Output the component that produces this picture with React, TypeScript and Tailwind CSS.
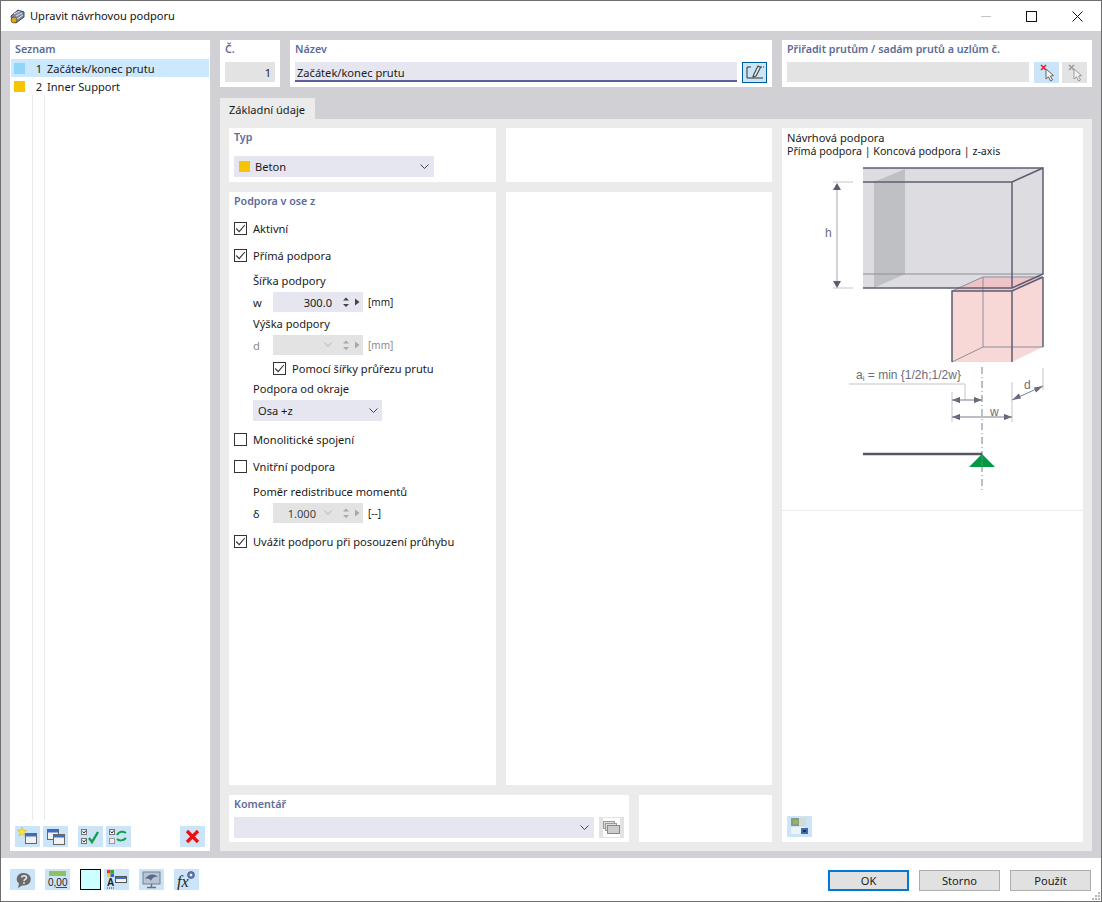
import React from "react";

const Chevron = ({ c = "#444", w = 9 }: { c?: string; w?: number }) => (
  <svg width={w} height="5" viewBox="0 0 9 5" preserveAspectRatio="none" className="shrink-0"><path d="M.5.5 4.5 4.5 8.5.5" fill="none" stroke={c} strokeWidth="1" /></svg>
);

const Check = ({ on = false }: { on?: boolean }) => (
  <span className="w-[13px] h-[13px] border border-[#333333] bg-white flex items-center justify-center shrink-0">
    {on && <svg width="11" height="11" viewBox="0 0 11 11"><path d="M1.2 5.5 4.2 8.6 9.8 2" fill="none" stroke="#333" strokeWidth="1.1" /></svg>}
  </span>
);

const CheckRow = ({ label, on, cls }: { label: string; on?: boolean; cls: string }) => (
  <div className={`flex items-center gap-[6px] h-[18px] ${cls}`}>
    <Check on={on} />
    <span>{label}</span>
  </div>
);

const Spin = ({ dis }: { dis?: boolean }) => {
  const c = dis ? "#a8a8a8" : "#444";
  return (
    <svg width="22" height="14" viewBox="0 0 22 14" className="shrink-0">
      <path d="M3 5.5 6 2.5 9 5.5Z M3 9 6 12 9 9Z" fill={c} />
      <path d="M15 3.5 19.5 7 15 10.5Z" fill={c} />
    </svg>
  );
};

const Btn = ({ children, gray }: { children: React.ReactNode; gray?: boolean }) => (
  <span className={`w-[25px] h-[21px] flex items-center justify-center shrink-0 ${gray ? "bg-[#e3e3e3]" : "bg-[#cce4f7]"}`}>{children}</span>
);

const Cursor = ({ c, x }: { c: string; x: string }) => (
  <svg width="21" height="20" viewBox="-3 -1 21 20">
    <path d="M7 5 7 15 9.5 12.8 11.5 17 13.5 16 11.5 12 14.5 11.5Z" fill="#f4f4f4" stroke={c} strokeWidth="1" />
    <path d="M2 1 7 6M7 1 2 6" stroke={x} strokeWidth="1.6" />
  </svg>
);

const Win = ({ x, y }: { x: number; y: number }) => (
  <g>
    <rect x={x + 0.5} y={y + 0.5} width="11" height="10" fill="#f2f2f2" stroke="#666" />
    <rect x={x + 1} y={y + 1} width="10" height="2.5" fill="#3b6fc4" />
  </g>
);

const Head = ({ children, h }: { children: React.ReactNode; h: string }) => (
  <div className={`${h} text-[10.7px] leading-[18px] font-semibold text-[#5b6b9a]`}>{children}</div>
);

export default function App() {
  return (
    <div className="w-[1102px] h-[902px] flex flex-col border border-[#6e6e6e] bg-white text-[11.1px] leading-[18px] text-[#1a1a1a] overflow-hidden relative" style={{ fontFamily: '"Noto Sans", sans-serif' }}>
      {/* title bar */}
      <div className="h-[30px] shrink-0 flex items-center bg-white">
        <svg width="17" height="17" viewBox="0 0 17 17" className="ml-[8px]">
          <path d="M2 8 9 2 15 4 15 9 7 15 3 13Z" fill="#7d8aa3" stroke="#3d4658" strokeWidth="1" />
          <path d="M5 6 11 3M7 8 13 5M8 11 14 7" stroke="#dfe5ee" strokeWidth="1" />
          <circle cx="5" cy="12" r="3" fill="#d8a52b" stroke="#5a4a1a" strokeWidth=".7" />
        </svg>
        <span className="ml-[4px] text-[#111]">Upravit návrhovou podporu</span>
        <div className="ml-auto flex items-center">
          <span className="w-[10px] h-px bg-[#c4c4c4] mr-[35px]" />
          <span className="w-[11px] h-[11px] border border-[#111] mr-[35px]" />
          <svg width="11" height="11" viewBox="0 0 11 11" className="mr-[18px]"><path d="M.5.5 10.5 10.5M10.5.5.5 10.5" stroke="#111" strokeWidth="1" /></svg>
        </div>
      </div>

      {/* main */}
      <div className="h-[827px] shrink-0 bg-[#d0d0d5] pt-[9px] pl-[9px] pr-[9px] flex gap-[10px]">
        {/* list */}
        <div className="w-[200px] h-[811px] bg-white flex flex-col shrink-0">
          <div className="pl-[5px]"><Head h="h-[19px]">Seznam</Head></div>
          <div className="mx-px flex-1 min-h-0 flex flex-col">
            <div className="h-[18px] flex items-center bg-[#cce8ff]">
              <span className="w-[11px] h-[11px] bg-[#91d6f7] ml-[3px]" />
              <span className="w-[14px] text-right ml-[3px] pt-[2px]">1</span>
              <span className="ml-[5px] pt-[2px]">Začátek/konec prutu</span>
            </div>
            <div className="h-[18px] flex items-center">
              <span className="w-[11px] h-[11px] bg-[#f6c500] ml-[3px]" />
              <span className="w-[14px] text-right ml-[3px] pt-[2px]">2</span>
              <span className="ml-[5px] pt-[2px]">Inner Support</span>
            </div>
            <div className="flex-1 min-h-0 ml-[21px] flex">
              <span className="w-px bg-[#e8e8e8]" />
              <span className="w-px bg-[#e8e8e8] ml-[11px]" />
            </div>
          </div>
          <div className="h-[21px] mt-[6px] mb-[4px] pl-[5px] flex items-start shrink-0">
            <Btn><svg width="22" height="19" viewBox="0 0 22 19"><Win x={8} y={6} /><path d="M5 0 6.3 3.2 9.6 3.4 7 5.5 8 9 5 7 2 9 3 5.5.4 3.4 3.7 3.2Z" fill="#f7e640" stroke="#c6ad20" strokeWidth=".5" /></svg></Btn>
            <span className="w-[3px]" />
            <Btn><svg width="20" height="18" viewBox="0 0 20 18"><Win x={1} y={1} /><Win x={7} y={6} /></svg></Btn>
            <span className="w-[10px]" />
            <Btn><svg width="21" height="18" viewBox="0 0 21 18"><rect x="1.5" y="1.5" width="5" height="5" fill="#eee" stroke="#777" /><rect x="1.5" y="10.5" width="5" height="5" fill="#eee" stroke="#777" /><path d="M2.5 3.5 4 5 6 2.5M2.5 12.5 4 14 6 11.5" fill="none" stroke="#333" /><path d="M9 10 12 14 18 4" fill="none" stroke="#12a04a" strokeWidth="2.4" /></svg></Btn>
            <span className="w-[3px]" />
            <Btn><svg width="21" height="18" viewBox="0 0 21 18"><rect x="1.5" y="1.5" width="5" height="5" fill="#eee" stroke="#777" /><rect x="1.5" y="10.5" width="5" height="5" fill="#eee" stroke="#999" /><path d="M2.5 3.5 4 5 6 2.5" fill="none" stroke="#333" /><path d="M9 7C11 3 15 3 18 5M18 10C15 13 11 13 9 11" fill="none" stroke="#12a04a" strokeWidth="2" /></svg></Btn>
            <span className="w-[49px]" />
            <Btn><svg width="15" height="15" viewBox="0 0 15 15"><path d="M2 2 13 13M13 2 2 13" stroke="#ee0f0f" strokeWidth="3.2" /></svg></Btn>
          </div>
        </div>

        {/* right column */}
        <div className="w-[872px] h-[811px] flex flex-col shrink-0">
          <div className="flex gap-[10px] h-[47px] shrink-0">
            <div className="w-[60px] bg-white px-[5px]">
              <Head h="h-[22px]">Č.</Head>
              <div className="h-[20px] bg-[#e3e3e3] text-right pr-[4px] leading-[22px]">1</div>
            </div>
            <div className="w-[482px] bg-white px-[5px]">
              <Head h="h-[22px]">Název</Head>
              <div className="flex gap-[5px]">
                <div className="w-[442px] h-[20px] bg-[#e5e6f0] border-b-2 border-[#5f5f9f] pl-[2px] leading-[22px]">Začátek/konec prutu</div>
                <span className="w-[25px] h-[21px] bg-[#cce4f7] border border-[#005a9e] flex items-center justify-center">
                  <svg width="20" height="17" viewBox="0 0 20 17"><path d="M6 3H2V14H18" fill="none" stroke="#333" /><path d="M8.5 11 13 2 15.5 3.5 11 12 8 13Z" fill="#e8e8e8" stroke="#444" strokeWidth="1.1" /><path d="M15 3H19" stroke="#333" strokeDasharray="2 1" /></svg>
                </span>
              </div>
            </div>
            <div className="w-[310px] bg-white px-[5px]">
              <Head h="h-[22px]">Přiřadit prutům / sadám prutů a uzlům č.</Head>
              <div className="flex">
                <div className="w-[242px] h-[20px] bg-[#e3e3e3]" />
                <span className="w-[5px]" />
                <Btn><Cursor c="#666" x="#e8202a" /></Btn>
                <span className="w-[3px]" />
                <Btn gray><Cursor c="#999" x="#9a9a9a" /></Btn>
              </div>
            </div>
          </div>

          <div className="mt-[11px] w-[95px] h-[21px] bg-[#ebebeb] pl-[9px] leading-[24px] shrink-0">Základní údaje</div>

          <div className="h-[732px] bg-[#ebebeb] p-[9px] flex gap-[10px] shrink-0">
            <div className="w-[543px] flex flex-col gap-[10px] shrink-0">
              <div className="flex gap-[10px] h-[54px]">
                <div className="w-[267px] bg-white px-[5px]">
                  <Head h="h-[28px]">Typ</Head>
                  <div className="w-[200px] h-[21px] bg-[#e5e6f0] flex items-center pl-[5px] pr-[5px]">
                    <span className="w-[11px] h-[11px] bg-[#f6c500]" />
                    <span className="ml-[5px]">Beton</span>
                    <span className="ml-auto"><Chevron /></span>
                  </div>
                </div>
                <div className="w-[266px] bg-white" />
              </div>
              <div className="flex gap-[10px] h-[594px]">
                <div className="w-[267px] bg-white px-[5px]">
                  <Head h="h-[18px]">Podpora v ose z</Head>
                  <CheckRow cls="mt-[10px]" label="Aktivní" on />
                  <CheckRow cls="mt-[9px]" label="Přímá podpora" on />
                  <div className="mt-[7px] h-[18px] ml-[19px]">Šířka podpory</div>
                  <div className="mt-[2px] h-[20px] ml-[19px] flex items-center">
                    <span className="w-[20px] pt-[2px]">w</span>
                    <div className="w-[90px] h-[20px] bg-[#e5e6f0] flex items-center justify-end pr-[1px]">
                      <span className="pt-[2px]">300.0</span>
                      <span className="ml-[8px]"><Spin /></span>
                    </div>
                    <span className="ml-[5px] text-[10px] pt-[1px]">[mm]</span>
                  </div>
                  <div className="mt-[3px] h-[18px] ml-[19px]">Výška podpory</div>
                  <div className="mt-[2px] h-[20px] ml-[19px] flex items-center text-[#8a8a8a]">
                    <span className="w-[20px] pt-[2px]">d</span>
                    <div className="w-[90px] h-[20px] bg-[#e3e3e3] flex items-center justify-end pr-[1px]">
                      <Chevron c="#b0b0b0" w={8} />
                      <span className="ml-[8px]"><Spin dis /></span>
                    </div>
                    <span className="ml-[5px] text-[10px] pt-[1px]">[mm]</span>
                  </div>
                  <CheckRow cls="mt-[5px] ml-[39px]" label="Pomocí šířky průřezu prutu" on />
                  <div className="mt-[2px] h-[18px] ml-[19px]">Podpora od okraje</div>
                  <div className="mt-[2px] w-[129px] h-[21px] ml-[19px] bg-[#e5e6f0] flex items-center pl-[5px] pr-[4px]">
                    <span className="pt-[2px]">Osa +z</span>
                    <span className="ml-auto"><Chevron /></span>
                  </div>
                  <CheckRow cls="mt-[10px]" label="Monolitické spojení" />
                  <CheckRow cls="mt-[9px]" label="Vnitřní podpora" />
                  <div className="mt-[7px] h-[18px] ml-[19px]">Poměr redistribuce momentů</div>
                  <div className="mt-[2px] h-[20px] ml-[19px] flex items-center">
                    <span className="w-[20px] pt-[2px]">δ</span>
                    <div className="w-[90px] h-[20px] bg-[#e3e3e3] flex items-center justify-end pr-[1px] text-[#444]">
                      <span className="pt-[2px]">1.000</span>
                      <span className="ml-[8px]"><Chevron c="#b0b0b0" w={8} /></span>
                      <span className="ml-[8px]"><Spin dis /></span>
                    </div>
                    <span className="ml-[5px] text-[10px] pt-[1px]">[--]</span>
                  </div>
                  <CheckRow cls="mt-[10px]" label="Uvážit podporu při posouzení průhybu" on />
                </div>
                <div className="w-[266px] bg-white" />
              </div>
              <div className="flex gap-[10px] h-[47px]">
                <div className="w-[400px] bg-white px-[5px]">
                  <Head h="h-[22px]">Komentář</Head>
                  <div className="flex gap-[5px]">
                    <div className="w-[360px] h-[21px] bg-[#e5e6f0] flex items-center justify-end pr-[5px]"><Chevron /></div>
                    <Btn gray>
                      <span className="w-[17px] h-[19px] bg-white flex items-center justify-center">
                        <svg width="17" height="13" viewBox="0 0 17 13"><rect x=".5" y=".5" width="11" height="7" fill="#ddd" stroke="#999" /><rect x="2.5" y="2.5" width="11" height="7" fill="#ddd" stroke="#999" /><rect x="4.5" y="4.5" width="12" height="8" fill="#ccc" stroke="#888" /></svg>
                      </span>
                    </Btn>
                  </div>
                </div>
                <div className="w-[133px] bg-white" />
              </div>
            </div>

            <div className="w-[301px] bg-white flex flex-col shrink-0 pb-[5px]">
              <div className="h-[32px] pl-[5px] pt-[3px] leading-[13px] shrink-0">
                <div>Návrhová podpora</div>
                <div className="text-[10.65px] leading-[14px]">Přímá podpora | Koncová podpora | z-axis</div>
              </div>
              <svg width="301" height="350" viewBox="782 160 301 350" className="shrink-0">
                <polygon points="863,168 1043,168 1043,274 1012,288 863,288" fill="#dcdce1" />
                <polygon points="874,182 905,169 905,274 874,288" fill="#bfc0c4" />
                <polygon points="983,277 1043,277 1043,347 1012,362 952,362 952,291" fill="#f8d7d7" />
                <polygon points="983,277 1043,277 1012,291 952,291" fill="#eec4c8" />
                <g fill="none" stroke="#8e8e9c" strokeWidth="1">
                  <path d="M863 274H1043" />
                  <path d="M983 277V347M983 347H1043M983 347 952 362M983 277H1043M983 277 952 291" />
                </g>
                <g fill="none" stroke="#5d5d72" strokeWidth="1.5">
                  <path d="M863 168H1043V274L1012 288H863" />
                  <path d="M863 182H1012V288M1012 182 1043 168" />
                  <path d="M952 362V291H1012V362M1043 277V347M1012 291 1043 277" />
                </g>
                <g stroke="#c5c5cd" strokeWidth="1" fill="none">
                  <path d="M833 182H853M833 288H853" />
                  <path d="M837 186V284" strokeWidth="1.5" />
                  <path d="M849 384H965V400M952 392V422M1012 382V422M1043 368V390" />
                </g>
                <g fill="#5d5d72">
                  <path d="M837 183 833 190H841Z M837 288 833 281H841Z" />
                  <path d="M952 400 960 397V403Z M982 400 974 397V403Z M952 417 960 414V420Z M1012 417 1004 414V420Z" />
                  <path d="M1012 400 1019 393.5 1021 398.5Z M1043 386 1036 392.5 1034 387.5Z" />
                </g>
                <g stroke="#7c7c8c" strokeWidth="1" fill="none">
                  <path d="M952 400H982M952 417H1012M1012 400 1043 386" />
                  <path d="M982 367V490" strokeDasharray="7 3 1 3" />
                </g>
                <path d="M863 454H982" stroke="#55556a" strokeWidth="2.5" />
                <polygon points="982,454 995,467 969,467" fill="#009a44" />
                <path d="M982 456V467" stroke="#7c7c8c" strokeDasharray="4 2" />
                <g fill="#6c6c7c" style={{ fontFamily: '"Liberation Sans", sans-serif' }} fontSize="12">
                  <text x="825" y="237">h</text>
                  <text x="856" y="379">a<tspan fontSize="8" dy="2">i</tspan><tspan dy="-2"> = min {"{"}1/2h;1/2w{"}"}</tspan></text>
                  <text x="990" y="416">w</text>
                  <text x="1024" y="389">d</text>
                </g>
              </svg>
              <div className="h-px bg-[#ebebeb] shrink-0" />
              <div className="flex-1" />
              <div className="pl-[5px] shrink-0">
                <Btn>
                  <svg width="20" height="19" viewBox="0 0 20 19"><rect x="1" y="1" width="14" height="8" fill="#8a9a88" /><rect x="3" y="3" width="5" height="4" fill="#8dbb4b" /><rect x="9" y="1" width="7" height="8" fill="#d5dad5" /><rect x="1" y="10" width="14" height="7" fill="#eef1f6" /><path d="M11 11H18V17H11Z" fill="#3e6bb0" /><path d="M13 13H16V15H13Z" fill="#1c2f55" /></svg>
                </Btn>
              </div>
            </div>
          </div>
        </div>
      </div>

      {/* bottom bar */}
      <div className="flex-1 bg-white flex items-start pt-[11px] pl-[9px] pr-[10px] relative">
        <Btn><svg width="18" height="18" viewBox="0 0 18 18"><path d="M10 2A6.5 6 0 0 1 10 14.5H8L4 17 5 12.5A6.5 6 0 0 1 10 2Z" fill="#6b6b6b" /><path d="M7.5 6.5C8 4.2 12.5 4.2 12.5 6.7 12.5 8.4 10 8.3 10 10" fill="none" stroke="#e8eef5" strokeWidth="1.5" /><circle cx="10" cy="12" r=".9" fill="#e8eef5" /></svg></Btn>
        <span className="w-[10px]" />
        <Btn>
          <svg width="25" height="21" viewBox="0 0 25 21">
            <rect x="4" y="2" width="17" height="5" fill="#8fc25f" />
            <text x="3" y="17" fontSize="10" fill="#222" style={{ fontFamily: '"Liberation Sans", sans-serif' }}>0,00</text>
            <path d="M11 18.5H22" stroke="#2a4a9a" />
          </svg>
        </Btn>
        <span className="w-[10px]" />
        <span className="w-[21px] h-[21px] bg-[#ccffff] border border-black shrink-0" />
        <span className="w-[3px]" />
        <Btn>
          <svg width="21" height="19" viewBox="0 0 21 19">
            <rect x="1" y="0" width="3.5" height="3.5" fill="#e33" /><rect x="4.5" y="0" width="3.5" height="3.5" fill="#3a3" /><rect x="1" y="3.5" width="3.5" height="3.5" fill="#ec3" /><rect x="4.5" y="3.5" width="3.5" height="3.5" fill="#36c" />
            <rect x="9.5" y="6.5" width="11" height="6" fill="#f2f2f2" stroke="#555" /><rect x="10" y="7" width="10" height="2" fill="#3b6fc4" />
            <text x="1" y="16" fontSize="10" fontWeight="700" fill="#222" style={{ fontFamily: '"Liberation Sans", sans-serif' }}>A</text>
            <path d="M1 18H9" stroke="#333" strokeDasharray="1 1" />
          </svg>
        </Btn>
        <span className="w-[10px]" />
        <Btn>
          <svg width="21" height="19" viewBox="0 0 21 19">
            <rect x="2" y="2" width="17" height="12" fill="#b7c4d4" stroke="#7a7f88" />
            <path d="M4 9C7 4 13 3 17 7 13 6 11 8 10 11 9 9 7 8 4 9Z" fill="#566a86" />
            <path d="M10.5 14V17M6 17.5H15" stroke="#6a6f78" strokeWidth="1.4" />
          </svg>
        </Btn>
        <span className="w-[10px]" />
        <Btn>
          <svg width="23" height="20" viewBox="0 0 23 20">
            <text x="2" y="17" fontSize="16" fontStyle="italic" fill="#222" style={{ fontFamily: '"Liberation Serif", serif' }}>fx</text>
            <circle cx="16" cy="5" r="3.4" fill="#6a7fb5" stroke="#3e4d78" strokeWidth=".8" />
            <circle cx="16" cy="5" r="1.2" fill="#eef" />
          </svg>
        </Btn>
        <div className="ml-auto flex gap-[10px] pt-px">
          <span className="w-[81px] h-[21px] bg-[#e1e1e1] border-2 border-[#0078d7] flex items-center justify-center">OK</span>
          <span className="w-[81px] h-[21px] bg-[#e1e1e1] border border-[#adadad] flex items-center justify-center">Storno</span>
          <span className="w-[81px] h-[21px] bg-[#e1e1e1] border border-[#adadad] flex items-center justify-center">Použít</span>
        </div>
        <svg width="10" height="10" viewBox="0 0 10 10" className="absolute right-0 bottom-0">
          <path d="M7 1h2v2H7ZM4 4h2v2H4ZM7 4h2v2H7ZM1 7h2v2H1ZM4 7h2v2H4ZM7 7h2v2H7Z" fill="#b5b5b5" />
        </svg>
      </div>
    </div>
  );
}
